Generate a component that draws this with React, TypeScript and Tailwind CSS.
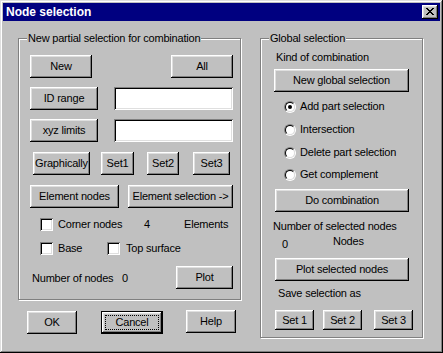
import React from 'react';

const raised =
  'bg-[#c0c0c0] shadow-[inset_-1px_-1px_0_#000,inset_1px_1px_0_#fff,inset_-2px_-2px_0_#808080,inset_2px_2px_0_#dfdfdf]';
const sunken =
  'bg-white shadow-[inset_1px_1px_0_#808080,inset_-1px_-1px_0_#fff,inset_2px_2px_0_#000,inset_-2px_-2px_0_#dfdfdf]';

const Btn: React.FC<{ className?: string; children: React.ReactNode }> = ({ className = '', children }) => (
  <div className={`flex items-center justify-center shrink-0 ${raised} ${className}`}>
    <span className="leading-[13px]">{children}</span>
  </div>
);

const Check: React.FC = () => <div className={`w-[13px] h-[13px] shrink-0 ${sunken}`}></div>;

const Radio: React.FC<{ checked?: boolean }> = ({ checked }) => (
  <div className="w-[12px] h-[12px] shrink-0 rounded-full border border-t-[#808080] border-l-[#808080] border-b-white border-r-white">
    <div className="w-full h-full rounded-full border border-t-black border-l-black border-b-[#dfdfdf] border-r-[#dfdfdf] bg-white flex items-center justify-center">
      {checked && <div className="w-[4px] h-[4px] rounded-full bg-black"></div>}
    </div>
  </div>
);

const Group: React.FC<{ label: string; className?: string; children: React.ReactNode }> = ({
  label,
  className = '',
  children,
}) => (
  <div className={`relative shrink-0 border border-[#808080] shadow-[1px_1px_0_#fff,inset_1px_1px_0_#fff] ${className}`}>
    <span className="absolute left-[8px] -top-[7px] bg-[#c0c0c0] px-[1px] leading-[13px] whitespace-nowrap">
      {label}
    </span>
    {children}
  </div>
);

const Text: React.FC<{ className?: string; children: React.ReactNode }> = ({ className = '', children }) => (
  <span className={`leading-[13px] whitespace-nowrap ${className}`}>{children}</span>
);

export default function App() {
  return (
    <div
      className="w-[443px] h-[353px] bg-[#c0c0c0] p-[3px] flex flex-col text-black text-[11px] tracking-[-0.2px] shadow-[inset_-1px_-1px_0_#000,inset_1px_1px_0_#dfdfdf,inset_-2px_-2px_0_#808080,inset_2px_2px_0_#fff]"
      style={{ fontFamily: '"Liberation Sans", Arial, sans-serif' }}
    >
      {/* Title bar */}
      <div className="h-[18px] bg-[#000080] flex items-center justify-between pl-[3px] pr-[2px] shrink-0">
        <span className="text-white font-bold text-[12px] tracking-normal">Node selection</span>
        <div className={`w-[16px] h-[14px] flex items-center justify-center ${raised}`}>
          <svg width="8" height="7" viewBox="0 0 8 7" shapeRendering="crispEdges" className="mt-[-1px]">
            <path
              d="M0 0h2v1H0zM6 0h2v1H6zM1 1h2v1H1zM5 1h2v1H5zM2 2h4v1H2zM3 3h2v1H3zM2 4h4v1H2zM1 5h2v1H1zM5 5h2v1H5zM0 6h2v1H0zM6 6h2v1H6z"
              fill="#000"
            />
          </svg>
        </div>
      </div>

      <div className="flex pl-[15px] pt-[17px]">
        {/* Left column */}
        <div className="flex flex-col w-[223px]">
          <Group label="New partial selection for combination" className="w-[223px] h-[262px]">
            <div className="flex flex-col pt-[16px] pl-[11px]">
              <div className="flex w-[203px]">
                <Btn className="w-[62px] h-[23px]">New</Btn>
                <Btn className="w-[62px] h-[23px] ml-auto">All</Btn>
              </div>
              <div className="flex mt-[9px]">
                <Btn className="w-[68px] h-[23px]">ID range</Btn>
                <div className={`w-[119px] h-[23px] ml-[16px] ${sunken}`}></div>
              </div>
              <div className="flex mt-[9px]">
                <Btn className="w-[68px] h-[23px]">xyz limits</Btn>
                <div className={`w-[119px] h-[23px] ml-[16px] ${sunken}`}></div>
              </div>
              <div className="flex mt-[10px]">
                <Btn className="w-[57px] h-[23px] ml-[3px]">Graphically</Btn>
                <Btn className="w-[33px] h-[23px] ml-[11px]">Set1</Btn>
                <Btn className="w-[32px] h-[23px] ml-[13px]">Set2</Btn>
                <Btn className="w-[37px] h-[23px] ml-[14px]">Set3</Btn>
              </div>
              <div className="flex mt-[10px]">
                <Btn className="w-[89px] h-[23px]">Element nodes</Btn>
                <Btn className="w-[105px] h-[23px] ml-[9px]">Element selection -&gt;</Btn>
              </div>
              <div className="flex items-center mt-[10px] h-[13px]">
                <div className="ml-[10px]">
                  <Check />
                </div>
                <Text className="ml-[5px] w-[86px]">Corner nodes</Text>
                <Text className="w-[40px]">4</Text>
                <Text>Elements</Text>
              </div>
              <div className="flex items-center mt-[11px] h-[13px]">
                <div className="ml-[10px]">
                  <Check />
                </div>
                <Text className="ml-[5px] w-[49px]">Base</Text>
                <Check />
                <Text className="ml-[6px]">Top surface</Text>
              </div>
              <div className="flex items-center mt-[11px] w-[203px]">
                <Text className="ml-[2px] w-[90px] pt-[2px]">Number of nodes</Text>
                <Text className="pt-[2px]">0</Text>
                <Btn className="w-[57px] h-[23px] ml-auto">Plot</Btn>
              </div>
            </div>
          </Group>

          <div className="flex mt-[11px]">
            <Btn className="w-[50px] h-[23px] ml-[9px]">OK</Btn>
            <div className="w-[62px] h-[23px] ml-[24px] border border-black flex">
              <div className={`flex-1 flex p-[3px] ${raised}`}>
                <div className="flex-1 flex items-center justify-center border border-dotted border-black">
                  <span className="leading-[13px]">Cancel</span>
                </div>
              </div>
            </div>
            <Btn className="w-[50px] h-[23px] ml-[23px] -mt-[1px]">Help</Btn>
          </div>
        </div>

        {/* Right group */}
        <Group label="Global selection" className="w-[163px] h-[300px] ml-[19px]">
          <div className="flex flex-col pt-[12px]">
            <Text className="ml-[15px]">Kind of combination</Text>
            <Btn className="w-[135px] h-[23px] ml-[13px] mt-[5px]">New global selection</Btn>
            <div className="flex items-center h-[13px] mt-[8px] ml-[23px]">
              <Radio checked />
              <Text className="ml-[4px]">Add part selection</Text>
            </div>
            <div className="flex items-center h-[13px] mt-[10px] ml-[23px]">
              <Radio />
              <Text className="ml-[4px]">Intersection</Text>
            </div>
            <div className="flex items-center h-[13px] mt-[10px] ml-[23px]">
              <Radio />
              <Text className="ml-[4px]">Delete part selection</Text>
            </div>
            <div className="flex items-center h-[13px] mt-[9px] ml-[23px]">
              <Radio />
              <Text className="ml-[4px]">Get complement</Text>
            </div>
            <Btn className="w-[134px] h-[23px] ml-[14px] mt-[8px]">Do combination</Btn>
            <Text className="ml-[12px] mt-[8px]">Number of selected nodes</Text>
            <div className="flex items-start mt-[2px]">
              <Text className="ml-[21px] mt-[3px]">0</Text>
              <Text className="ml-[45px]">Nodes</Text>
            </div>
            <Btn className="w-[134px] h-[23px] ml-[14px] mt-[7px]">Plot selected nodes</Btn>
            <Text className="ml-[17px] mt-[6px]">Save selection as</Text>
            <div className="flex mt-[10px]">
              <Btn className="w-[39px] h-[20px] ml-[14px]">Set 1</Btn>
              <Btn className="w-[39px] h-[20px] ml-[9px]">Set 2</Btn>
              <Btn className="w-[39px] h-[20px] ml-[12px]">Set 3</Btn>
            </div>
          </div>
        </Group>
      </div>
    </div>
  );
}
